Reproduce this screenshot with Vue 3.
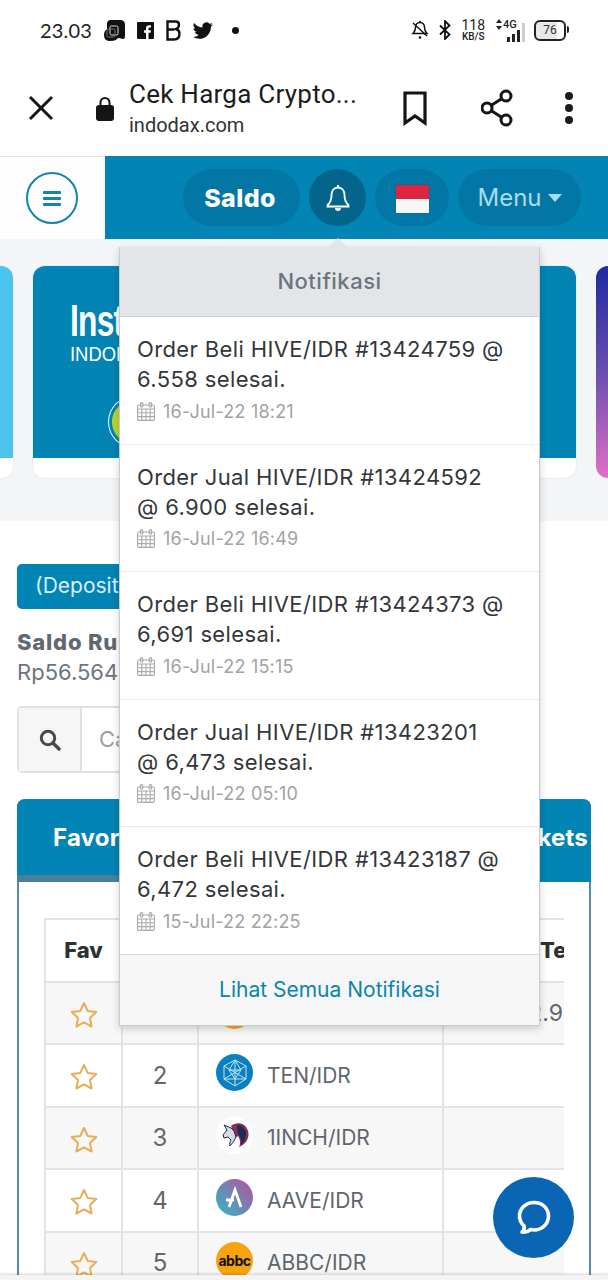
<template>
  <div class="screen">
    <!-- Status bar -->
    <div class="status-bar">
      <span class="clock">23.03</span>
      <div class="status-apps">
        <svg width="21" height="21" viewBox="0 0 21 21"><path d="M7 0h9q5 0 5 5v11q0 3-2 3l-4-1q-2 0-3 2-2 1-6 1-6 0-6-6 0-4 3-6V4q0-4 4-4z" fill="#111"/><rect x="6" y="6" width="8" height="9" rx="1.500" fill="none" stroke="#ddd" stroke-width="1"/><rect x="3" y="9" width="8" height="8" rx="1.500" fill="none" stroke="#777" stroke-width="1"/></svg>
        <svg width="17" height="17" viewBox="0 0 17 17"><rect width="17" height="17" fill="#111" rx="1"/><path d="M11.500 17v-6.200h2.100l.3-2.500h-2.400V6.800c0-.7.2-1.200 1.200-1.200h1.300V3.400c-.3 0-1-.1-1.900-.1-1.900 0-3.100 1.100-3.100 3.200v1.800H7v2.500h2V17z" fill="#fff"/></svg>
        <svg width="15" height="21" viewBox="0 0 15 21"><path d="M1.500 1.500h8q3.500 0 3.500 3.200 0 3-3 4.300 3.500 1 3.500 4.500 0 6-5.500 6H1.500zM1.500 9.500h7" fill="none" stroke="#111" stroke-width="2.400"/></svg>
        <svg width="20" height="17" viewBox="0 0 24 20"><path d="M23.600 2.500c-.9.400-1.800.7-2.800.8 1-.6 1.800-1.500 2.100-2.700-.9.600-2 1-3.100 1.200a4.900 4.900 0 0 0-8.400 4.500C7.300 6.100 3.700 4.100 1.300.9.900 1.700.6 2.500.6 3.400c0 1.700.9 3.200 2.200 4.100-.8 0-1.600-.2-2.200-.6v.1c0 2.400 1.700 4.400 3.900 4.800-.7.200-1.500.2-2.200.1.600 2 2.400 3.400 4.600 3.400A9.900 9.900 0 0 1 0 17.800 13.900 13.900 0 0 0 7.500 20c9.100 0 14-7.500 14-14v-.6c1-.7 1.800-1.600 2.100-2.900z" fill="#111"/></svg>
        <span class="dot"></span>
      </div>
      <div class="status-right">
        <svg width="18" height="20" viewBox="0 0 18 20"><path d="M9 2.500c-3 0-4.500 2.500-4.500 5 0 3-1 4.500-2.500 6h14c-1.500-1.500-2.500-3-2.500-6 0-2.500-1.500-5-4.500-5z" fill="none" stroke="#111" stroke-width="1.500"/><path d="M2 3l14 13" stroke="#111" stroke-width="1.500"/><circle cx="9" cy="17.500" r="1.300" fill="#111"/><path d="M9 .8v2" stroke="#111" stroke-width="1.500"/></svg>
        <svg width="14" height="20" viewBox="0 0 14 20"><path d="M2 5.500l9.500 9L7 19V1l4.500 4.500L2 14.500" fill="none" stroke="#111" stroke-width="1.800"/></svg>
        <div class="speed"><span>118</span><small>KB/S</small></div>
        <div class="signal">
          <svg width="8" height="13" viewBox="0 0 8 13"><path d="M4 1l3 4H1zM4 12l3-4H1z" fill="#222"/></svg>
          <b>4G</b>
          <i class="bars"><em class="b1"></em><em class="b2"></em><em class="b3"></em><em class="b4"></em></i>
        </div>
        <div class="battery"><span>76</span></div>
      </div>
    </div>

    <!-- Browser bar -->
    <div class="browser-bar">
      <svg class="close-ic" width="26" height="26" viewBox="0 0 26 26"><path d="M2 2l22 22M24 2L2 24" stroke="#151515" stroke-width="3"/></svg>
      <svg class="lock-ic" width="18" height="25" viewBox="0 0 18 25"><path d="M4.500 10V6.500a4.500 4.500 0 0 1 9 0V10" fill="none" stroke="#151515" stroke-width="2"/><rect y="9" width="18" height="16" rx="3" fill="#151515"/></svg>
      <div class="page-title">
        <div class="title">Cek Harga Crypto...</div>
        <div class="host">indodax.com</div>
      </div>
      <svg class="mark-ic" width="24" height="35" viewBox="0 0 24 35"><path d="M2 2h20v30l-10-7-10 7z" fill="none" stroke="#151515" stroke-width="3.200"/></svg>
      <svg class="share-ic" width="32" height="38" viewBox="0 0 32 38"><path d="M25 7L6 19l19 12" fill="none" stroke="#151515" stroke-width="3"/><circle cx="25" cy="7" r="5" fill="#fff" stroke="#151515" stroke-width="3"/><circle cx="6" cy="19" r="5" fill="#fff" stroke="#151515" stroke-width="3"/><circle cx="25" cy="31" r="5" fill="#fff" stroke="#151515" stroke-width="3"/></svg>
      <div class="kebab"><span></span><span></span><span></span></div>
    </div>

    <!-- Site nav -->
    <nav class="site-nav">
      <div class="nav-left">
        <div class="burger"><span></span><span></span><span></span></div>
      </div>
      <div class="nav-right">
        <div class="pill saldo">Saldo</div>
        <div class="pill bell">
          <svg width="24" height="28" viewBox="0 0 24 28"><path d="M12 3.500c-4.500 0-6.500 3.500-6.500 7.500 0 5-1.500 8-4 10v1.500h21V21c-2.500-2-4-5-4-10 0-4-2-7.500-6.500-7.500z" fill="none" stroke="#fff" stroke-width="1.800"/><path d="M12 1v3" stroke="#fff" stroke-width="2"/><path d="M9 24h6a3 3 0 0 1-6 0z" fill="#fff"/></svg>
        </div>
        <div class="pill flag-pill"><div class="flag"><div class="flag-red"></div></div></div>
        <div class="pill menu">Menu<i class="caret"></i></div>
      </div>
    </nav>

    <!-- Promo carousel -->
    <section class="promo">
      <div class="promo-side side-left"></div>
      <div class="promo-card">
        <div class="promo-blue">
          <div class="promo-big">Instant</div>
          <div class="promo-small">INDODAX</div>
          <div class="promo-coin"></div>
        </div>
      </div>
      <div class="promo-side side-right"></div>
    </section>

    <!-- Main content -->
    <main class="content">
      <div class="deposit-btn">(Deposit Rupiah)</div>
      <div class="saldo-label">Saldo Rupiah</div>
      <div class="saldo-value">Rp56.564</div>
      <div class="search-group">
        <div class="search-addon">
          <svg width="22" height="22" viewBox="0 0 22 22"><circle cx="9" cy="9" r="6.700" fill="none" stroke="#454a4f" stroke-width="3"/><path d="M14 14l6 6" stroke="#454a4f" stroke-width="3.400" stroke-linecap="round"/></svg>
        </div>
        <div class="search-input">Cari</div>
      </div>

      <div class="market-card">
        <div class="market-tabs">
          <span class="tab tab-fav">Favorit</span>
          <span class="tab tab-mkt">Markets</span>
        </div>
        <div class="table-wrap">
          <table class="market-table">
            <thead>
              <tr>
                <th class="c-fav">Fav</th>
                <th class="c-no">#</th>
                <th class="c-pair">Aset</th>
                <th class="c-last">Te</th>
              </tr>
            </thead>
            <tbody>
              <tr v-for="row in rows" :key="row.no">
                <td class="center">
                  <svg width="28" height="27" viewBox="0 0 28 27"><path d="M14 2l3.700 7.900 8.600 1.100-6.300 6 1.600 8.500L14 21.400l-7.600 4.100L8 17l-6.300-6 8.600-1.100z" fill="none" stroke="#e9ad57" stroke-width="2" stroke-linejoin="round"/></svg>
                </td>
                <td class="center num">{{ row.no }}</td>
                <td>
                  <div class="pair">
                    <div class="coin" :class="row.cls">
                      <svg v-if="row.cls === 'ten'" width="30" height="30" viewBox="0 0 30 30"><g fill="none" stroke="#bfe6f5" stroke-width="1"><path d="M15 2l11 6v13l-11 7-11-7V8zM15 2v26M4 8l22 13M26 8L4 21M9 12h12l-6 9zM15 2l-6 10M15 2l6 10M4 21h22"/></g></svg>
                      <svg v-else-if="row.cls === 'inch'" width="32" height="30" viewBox="0 0 32 30"><path d="M12 6c6-5 15-3 17 5 2 7-2 13-9 16 2-4 1-8-1-11l-3 2z" fill="#8b2f4f"/><path d="M18 5c5 0 9 4 9 9 0 4-2 8-5 11 1-4 0-8-3-11z" fill="#1c2b57"/><path d="M5 5l7 3 3 3 2 6-2 4-4 5c-1-2 0-4 1-6l-3-3-4 1-1-3 4-5z" fill="#d5d9e2" stroke="#1c2b57" stroke-width="1"/></svg>
                      <svg v-else-if="row.cls === 'aave'" width="24" height="24" viewBox="0 0 24 24"><path d="M6 21L12 4l6 17M3 14h8" fill="none" stroke="#fff" stroke-width="2.800"/></svg>
                      <span v-else-if="row.cls === 'abbc'">abbc</span>
                    </div>
                    <span>{{ row.pair }}</span>
                  </div>
                </td>
                <td class="last-cell">{{ row.last }}</td>
              </tr>
            </tbody>
          </table>
        </div>
      </div>
    </main>

    <!-- Notification dropdown -->
    <div class="notif">
      <i class="notif-arrow"></i>
      <div class="notif-head">Notifikasi</div>
      <div v-for="n in notifs" :key="n.id" class="notif-item">
        <div class="notif-text">{{ n.text }}</div>
        <div class="notif-date">
          <svg width="18" height="19" viewBox="0 0 18 19"><g fill="none" stroke="#a9a9a9" stroke-width="1.100"><rect x=".6" y="3" width="16.800" height="15.400" rx="1.200"/><path d="M.6 7h16.800M.6 10.800h16.800M.6 14.600h16.800M4.800 7v11.400M9 7v11.400M13.200 7v11.400"/><rect x="3.400" y=".6" width="2.400" height="4.400" rx="1"/><rect x="12.200" y=".6" width="2.400" height="4.400" rx="1"/></g></svg>
          <span>{{ n.date }}</span>
        </div>
      </div>
      <div class="notif-foot">Lihat Semua Notifikasi</div>
    </div>

    <!-- Chat bubble -->
    <div class="chat-btn">
      <svg width="36" height="38" viewBox="0 0 36 38"><path d="M18 3.500c-8 0-14.500 6-14.500 13.500 0 4 1.800 7.500 4.700 10 .3 2-.5 4.500-2.200 6 3.500.5 6.500-.5 8.500-2.400 1.100.2 2.300.4 3.500.4 8 0 14.500-6 14.500-14S26 3.500 18 3.500z" fill="none" stroke="#fff" stroke-width="3.600" stroke-linejoin="round"/></svg>
    </div>
    <div class="bottom-edge"></div>
  </div>
</template>

<script setup>
// the "@" stays with the price on the Jual rows, same break as the site
const notifs = [
  { id: 13424759, text: 'Order Beli HIVE/IDR #13424759 @ 6.558 selesai.', date: '16-Jul-22 18:21' },
  { id: 13424592, text: 'Order Jual HIVE/IDR #13424592 @\u00a06.900 selesai.', date: '16-Jul-22 16:49' },
  { id: 13424373, text: 'Order Beli HIVE/IDR #13424373 @ 6,691 selesai.', date: '16-Jul-22 15:15' },
  { id: 13423201, text: 'Order Jual HIVE/IDR #13423201 @\u00a06,473 selesai.', date: '16-Jul-22 05:10' },
  { id: 13423187, text: 'Order Beli HIVE/IDR #13423187 @ 6,472 selesai.', date: '15-Jul-22 22:25' }
]

const rows = [
  { no: 1, pair: 'BTC/IDR', cls: 'btc', last: '292.99' },
  { no: 2, pair: 'TEN/IDR', cls: 'ten', last: '' },
  { no: 3, pair: '1INCH/IDR', cls: 'inch', last: '' },
  { no: 4, pair: 'AAVE/IDR', cls: 'aave', last: '' },
  { no: 5, pair: 'ABBC/IDR', cls: 'abbc', last: '' }
]
</script>

<style>
html, body {
  margin: 0;
  background: #fff;
}
</style>

<style scoped>
.screen {
  position: relative;
  width: 608px;
  height: 1280px;
  overflow: hidden;
  background: #fff;
  font-family: Inter, "Noto Sans", sans-serif;
  color: #212529;
}

/* Status bar */
.status-bar {
  height: 60px;
  display: flex;
  align-items: center;
  padding-left: 40px;
  padding-right: 42px;
  box-sizing: border-box;
}
.clock {
  font-family: Lato, sans-serif;
  font-size: 20px;
  color: #222;
  letter-spacing: 0.2px;
}
.status-apps {
  display: flex;
  align-items: center;
  gap: 12px;
  margin-left: 12px;
}
.dot {
  width: 7px;
  height: 7px;
  border-radius: 50%;
  background: #111;
  margin-left: 7px;
}
.status-right {
  margin-left: auto;
  display: flex;
  align-items: center;
  gap: 9px;
}
.speed {
  display: flex;
  flex-direction: column;
  align-items: center;
  font-family: Roboto, sans-serif;
  font-size: 14px;
  line-height: 13px;
  color: #222;
}
.speed small {
  font-size: 10px;
  line-height: 10px;
  font-weight: 500;
}
.signal {
  display: flex;
  align-items: flex-start;
  position: relative;
  width: 30px;
  height: 24px;
  margin-left: 1px;
}
.signal b {
  font-family: Roboto, sans-serif;
  font-size: 11px;
  line-height: 13px;
  font-weight: 500;
  color: #222;
}
.bars {
  position: absolute;
  right: 0;
  bottom: 0;
  display: flex;
  align-items: flex-end;
  gap: 2px;
}
.bars em {
  display: block;
  width: 3px;
  background: #222;
}
.bars .b1 { height: 5px; }
.bars .b2 { height: 8px; }
.bars .b3 { height: 12px; }
.bars .b4 { height: 19px; background: #ccc; }
.battery {
  position: relative;
  width: 28px;
  height: 17px;
  border: 2px solid #222;
  border-radius: 6px;
  display: flex;
  align-items: center;
  justify-content: center;
  background: linear-gradient(90deg, #e9e9e9 76%, #fff 76%);
}
.battery::after {
  content: "";
  position: absolute;
  right: -5px;
  top: 4px;
  width: 2px;
  height: 7px;
  background: #222;
  border-radius: 0 2px 2px 0;
}
.battery span {
  font-family: Roboto, sans-serif;
  font-size: 12px;
  color: #333;
}

/* Browser bar */
.browser-bar {
  height: 96px;
  display: flex;
  align-items: center;
  box-sizing: border-box;
  padding-left: 28px;
}
.close-ic { flex: none; }
.lock-ic {
  flex: none;
  margin-left: 42px;
  margin-top: 1px;
}
.page-title {
  margin-left: 15px;
  width: 251px;
  font-family: Roboto, sans-serif;
}
.title {
  font-size: 26px;
  line-height: 31px;
  color: #1d1d1d;
  white-space: nowrap;
  letter-spacing: 0.25px;
}
.host {
  font-size: 20px;
  line-height: 26px;
  color: #333;
  margin-top: 2px;
}
.mark-ic { flex: none; margin-left: 23px; }
.share-ic { flex: none; margin-left: 54px; }
.kebab {
  margin-left: 52px;
  display: flex;
  flex-direction: column;
  gap: 4px;
}
.kebab span {
  width: 8px;
  height: 8px;
  border-radius: 50%;
  background: #1c1c1c;
}

/* Site nav */
.site-nav {
  height: 83px;
  display: flex;
}
.nav-left {
  width: 105px;
  background: #fdfdfd;
  border-top: 1px solid #e6e6e6;
  display: flex;
  align-items: center;
  padding-left: 26px;
  box-sizing: border-box;
}
.burger {
  width: 52px;
  height: 52px;
  box-sizing: border-box;
  border: 2px solid #1583ad;
  border-radius: 50%;
  display: flex;
  flex-direction: column;
  align-items: center;
  justify-content: center;
  gap: 3px;
}
.burger span {
  width: 18px;
  height: 3px;
  background: #1583ad;
  border-radius: 1px;
}
.nav-right {
  flex: 1;
  background: #0284b5;
  display: flex;
  justify-content: flex-end;
  gap: 9px;
  padding: 13px 27px 0 0;
  box-sizing: border-box;
}
.pill {
  height: 57px;
  border-radius: 29px;
  background: #0277a6;
  display: flex;
  align-items: center;
  justify-content: center;
  box-sizing: border-box;
}
.saldo {
  width: 117px;
  color: #fff;
  font-weight: 800;
  font-size: 25px;
  letter-spacing: 0.4px;
  padding-right: 3px;
}
.bell {
  width: 57px;
  background: #04658c;
}
.flag-pill { width: 74px; }
.flag {
  width: 33px;
  height: 28px;
  margin-top: 3px;
  background: #f7f7f7;
  box-shadow: 0 0 1px rgba(0, 0, 0, 0.3);
}
.flag-red {
  height: 14px;
  background: #df2440;
}
.menu {
  width: 123px;
  color: #a8dcf0;
  font-size: 24px;
}
.caret {
  display: block;
  margin-left: 6px;
  margin-top: 1px;
  border-left: 7px solid transparent;
  border-right: 7px solid transparent;
  border-top: 8px solid #a8dcf0;
}

/* Promo */
.promo {
  height: 282px;
  background: #f4f5f6;
  padding-top: 27px;
  box-sizing: border-box;
  display: flex;
  gap: 20px;
  margin-left: -20px;
  width: 700px;
}
.promo-side {
  height: 212px;
  border-radius: 12px;
  flex: none;
}
.side-left {
  width: 33px;
  background: linear-gradient(#4bc3ec 0 192px, #fff 192px);
  box-shadow: 0 0 0 1px #eceded;
}
.side-right {
  width: 60px;
  background: linear-gradient(#1f2aa0, #6a4fb0 50%, #e070c4);
}
.promo-card {
  width: 543px;
  height: 212px;
  background: #fff;
  border-radius: 12px;
  box-shadow: 0 0 0 1px #eceded;
  overflow: hidden;
  flex: none;
}
.promo-blue {
  position: relative;
  height: 192px;
  background: #0284b5;
  color: #fff;
  padding: 34px 0 0 37px;
  box-sizing: border-box;
}
.promo-big {
  font-family: "Liberation Sans", sans-serif;
  font-weight: 700;
  font-size: 44px;
  line-height: 42px;
  transform: scaleX(0.72);
  transform-origin: left;
  letter-spacing: -1px;
  white-space: nowrap;
}
.promo-small {
  font-family: "Liberation Sans", sans-serif;
  font-size: 20px;
  line-height: 24px;
  transform: scaleX(0.92);
  transform-origin: left;
}
.promo-coin {
  position: absolute;
  left: 76px;
  top: 131px;
  width: 50px;
  height: 50px;
  border-radius: 50%;
  box-sizing: border-box;
  background: #b7d433;
  border: 3px solid #0284b5;
  box-shadow: 0 0 0 1px #fff;
}

/* Content */
.content {
  padding: 43px 17px 0;
}
.deposit-btn {
  width: 300px;
  height: 45px;
  border-radius: 5px;
  background: #0284b5;
  color: #d7eff8;
  font-size: 21px;
  line-height: 44px;
  padding-left: 18px;
  box-sizing: border-box;
}
.saldo-label {
  margin-top: 20px;
  font-weight: 800;
  font-size: 22px;
  line-height: 27px;
  letter-spacing: 0.8px;
  color: #5f6871;
  white-space: nowrap;
}
.saldo-value {
  font-size: 22px;
  line-height: 33px;
  color: #6c757d;
}
.search-group {
  margin-top: 17px;
  width: 500px;
  height: 67px;
  border: 2px solid #dfe1e3;
  border-radius: 5px;
  display: flex;
  box-sizing: border-box;
}
.search-addon {
  width: 61px;
  background: #f6f6f6;
  border-right: 2px solid #dfe1e3;
  display: flex;
  align-items: center;
  justify-content: center;
}
.search-input {
  flex: 1;
  padding-left: 17px;
  line-height: 63px;
  font-size: 22px;
  color: #9a9fa4;
}
.market-card {
  margin-top: 26px;
  height: 520px;
  border: 2px solid #5a8aaa;
  border-top: 0;
  border-radius: 8px 8px 0 0;
  box-sizing: border-box;
}
.market-tabs {
  height: 83px;
  margin: 0 -2px;
  display: flex;
  color: #fff;
  font-weight: 700;
  font-size: 24px;
  letter-spacing: 0.2px;
}
.tab {
  flex: 1;
  height: 83px;
  box-sizing: border-box;
  background: #0284b5;
  display: flex;
  align-items: center;
}
.tab-fav {
  border-radius: 8px 0 0 0;
  border-bottom: 7px solid #4a7f9c;
  padding: 0 0 0 36px;
}
.tab-mkt {
  border-radius: 0 8px 0 0;
  justify-content: flex-end;
  padding: 0 3px 7px 0;
}
.table-wrap {
  margin: 36px 25px 0 25px;
  overflow: hidden;
}
.market-table {
  width: 620px;
  table-layout: fixed;
  border-collapse: collapse;
}
.market-table th,
.market-table td {
  border: 2px solid #e2e3e4;
  height: 62.5px;
  padding: 0;
  box-sizing: border-box;
  font-size: 23px;
  color: #5e666e;
  font-weight: 400;
}
.market-table th {
  font-weight: 800;
  color: #2e3134;
  font-size: 22px;
}
.market-table tbody tr:nth-child(odd) {
  background: #f7f7f7;
}
.c-fav { width: 77px; }
.c-no { width: 76px; }
.c-pair { width: 245px; }
.market-table th.c-last {
  text-align: left;
  padding-left: 96px;
}
.center {
  text-align: center;
}
.center svg {
  display: block;
  margin: 3px auto 0;
}
.market-table td.num {
  font-size: 24px;
  color: #666;
}
.market-table td.last-cell {
  padding-left: 56px;
  white-space: nowrap;
}
.pair {
  display: flex;
  align-items: center;
  gap: 14px;
  padding-left: 17px;
  font-size: 21px;
}
.coin {
  width: 37px;
  height: 37px;
  border-radius: 50%;
  flex: none;
  margin-top: -5px;
  display: flex;
  align-items: center;
  justify-content: center;
}
.btc { background: #f4a82a; }
.ten { background: #0a80c0; }
.inch { background: #fff; }
.aave { background: linear-gradient(225deg, #b6509e, #2ebac6); }
.abbc {
  background: #f8a30e;
  color: #111;
  font-size: 14px;
  font-weight: 700;
  letter-spacing: -0.5px;
}

/* Notification dropdown */
.notif {
  position: absolute;
  left: 119px;
  top: 247px;
  width: 421px;
  box-sizing: border-box;
  border: 1px solid #c9cbcd;
  border-top: 0;
  background: #fff;
  box-shadow: 0 3px 8px rgba(0, 0, 0, 0.18);
}
.notif-arrow {
  position: absolute;
  left: 208px;
  top: -9px;
  width: 0;
  height: 0;
  border-left: 10px solid transparent;
  border-right: 10px solid transparent;
  border-bottom: 9px solid #e3e6e9;
}
.notif-head {
  height: 70px;
  background: #e3e6e9;
  border-bottom: 1px solid #cfd1d3;
  box-sizing: border-box;
  text-align: center;
  line-height: 68px;
  font-size: 22px;
  font-weight: 500;
  letter-spacing: 0.5px;
  color: #6c757d;
}
.notif-item {
  height: 127.5px;
  box-sizing: border-box;
  border-bottom: 1px solid #e8e9ea;
  padding: 17px 17px 0;
}
.notif-text {
  font-size: 22px;
  line-height: 30px;
  letter-spacing: 0.38px;
  color: #33373b;
}
.notif-date {
  display: flex;
  align-items: center;
  gap: 8px;
  margin-top: 4px;
  height: 26px;
  font-size: 18px;
  letter-spacing: 0.2px;
  color: #a2a2a2;
}
.notif-foot {
  height: 71px;
  background: #f6f6f6;
  border-top: 1px solid #d5d6d7;
  margin-top: -1px;
  box-sizing: border-box;
  text-align: center;
  line-height: 69px;
  font-size: 21px;
  color: #0a86ac;
}

/* Chat */
.chat-btn {
  position: absolute;
  left: 493px;
  top: 1177px;
  width: 81px;
  height: 81px;
  border-radius: 50%;
  background: #0a66b5;
  display: flex;
  align-items: center;
  justify-content: center;
}
.bottom-edge {
  position: absolute;
  left: 0;
  right: 0;
  bottom: 0;
  height: 5px;
  background: #f4f4f4;
  box-shadow: 0 -1px 3px rgba(0, 0, 0, 0.18);
}
</style>
